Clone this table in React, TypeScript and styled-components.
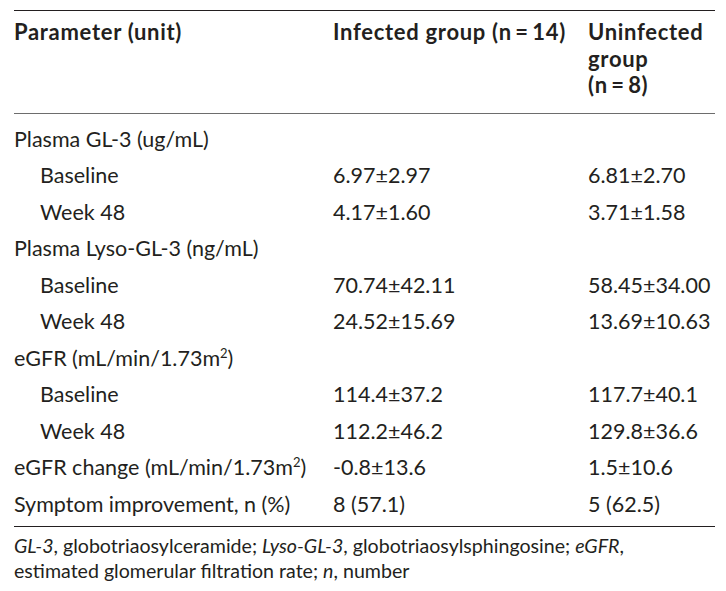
import React from 'react';
import styled, { createGlobalStyle } from 'styled-components';

const GlobalStyle = createGlobalStyle`
  html, body {
    margin: 0;
    padding: 0;
    background: #ffffff;
  }
  body {
    font-family: Lato, "Liberation Sans", sans-serif;
    color: #231f20;
  }
`;

const Wrapper = styled.div`
  width: 701px;
  padding: 10px 0 0 14px;
`;

const Table = styled.table`
  width: 100%;
  border-collapse: collapse;
  table-layout: fixed;
  font-size: 21.5px;
  border-top: 1px solid #231f20;
  border-bottom: 1px solid #231f20;
`;

const HeadRow = styled.tr`
  border-bottom: 1px solid #6d6d6d;
`;

const HeadCell = styled.th`
  text-align: left;
  vertical-align: top;
  font-weight: 700;
  font-size: 22px;
  letter-spacing: 0.7px;
  line-height: 26.5px;
  padding: 8px 0 14px 0;
  white-space: nowrap;
`;

const BodyCell = styled.td<{ $indent?: boolean }>`
  height: 36.5px;
  padding: 0 0 0 ${(p) => (p.$indent ? '26px' : '0')};
  line-height: 24px;
  vertical-align: middle;
  white-space: nowrap;
`;

const FirstRow = styled.tr`
  td {
    padding-top: 7px;
  }
`;

const LastRow = styled.tr`
  td {
    padding-bottom: 4px;
  }
`;

const Footnote = styled.p`
  margin: 0;
  padding-top: 6px;
  font-size: 19.6px;
  line-height: 25px;
`;

type Row = {
  label: React.ReactNode;
  infected?: string;
  uninfected?: string;
  indent?: boolean;
};

const m2 = (
  <>
    m<sup style={{ fontSize: '13px', lineHeight: 0 }}>2</sup>
  </>
);

const rows: Row[] = [
  { label: 'Plasma GL-3 (ug/mL)' },
  { label: 'Baseline', infected: '6.97±2.97', uninfected: '6.81±2.70', indent: true },
  { label: 'Week 48', infected: '4.17±1.60', uninfected: '3.71±1.58', indent: true },
  { label: 'Plasma Lyso-GL-3 (ng/mL)' },
  { label: 'Baseline', infected: '70.74±42.11', uninfected: '58.45±34.00', indent: true },
  { label: 'Week 48', infected: '24.52±15.69', uninfected: '13.69±10.63', indent: true },
  { label: <>eGFR (mL/min/1.73{m2})</> },
  { label: 'Baseline', infected: '114.4±37.2', uninfected: '117.7±40.1', indent: true },
  { label: 'Week 48', infected: '112.2±46.2', uninfected: '129.8±36.6', indent: true },
  { label: <>eGFR change (mL/min/1.73{m2})</>, infected: '-0.8±13.6', uninfected: '1.5±10.6' },
  { label: 'Symptom improvement, n (%)', infected: '8 (57.1)', uninfected: '5 (62.5)' },
];

const App: React.FC = () => {
  return (
    <Wrapper>
      <GlobalStyle />
      <Table>
        <colgroup>
          <col style={{ width: '319px' }} />
          <col style={{ width: '255px' }} />
          <col />
        </colgroup>
        <thead>
          <HeadRow>
            <HeadCell>Parameter (unit)</HeadCell>
            <HeadCell>Infected group (n{'\u2009'}={'\u2009'}14)</HeadCell>
            <HeadCell>
              Uninfected
              <br />
              group
              <br />
              (n{'\u2009'}={'\u2009'}8)
            </HeadCell>
          </HeadRow>
        </thead>
        <tbody>
          {rows.map((row, i) => {
            const RowTag = i === 0 ? FirstRow : i === rows.length - 1 ? LastRow : 'tr';
            return (
              <RowTag key={i}>
                <BodyCell $indent={row.indent}>{row.label}</BodyCell>
                <BodyCell>{row.infected}</BodyCell>
                <BodyCell>{row.uninfected}</BodyCell>
              </RowTag>
            );
          })}
        </tbody>
      </Table>
      <Footnote>
        <i>GL-3</i>, globotriaosylceramide; <i>Lyso-GL-3</i>, globotriaosylsphingosine; <i>eGFR</i>,
        <br />
        estimated glomerular filtration rate; <i>n</i>, number
      </Footnote>
    </Wrapper>
  );
};

export default App;
